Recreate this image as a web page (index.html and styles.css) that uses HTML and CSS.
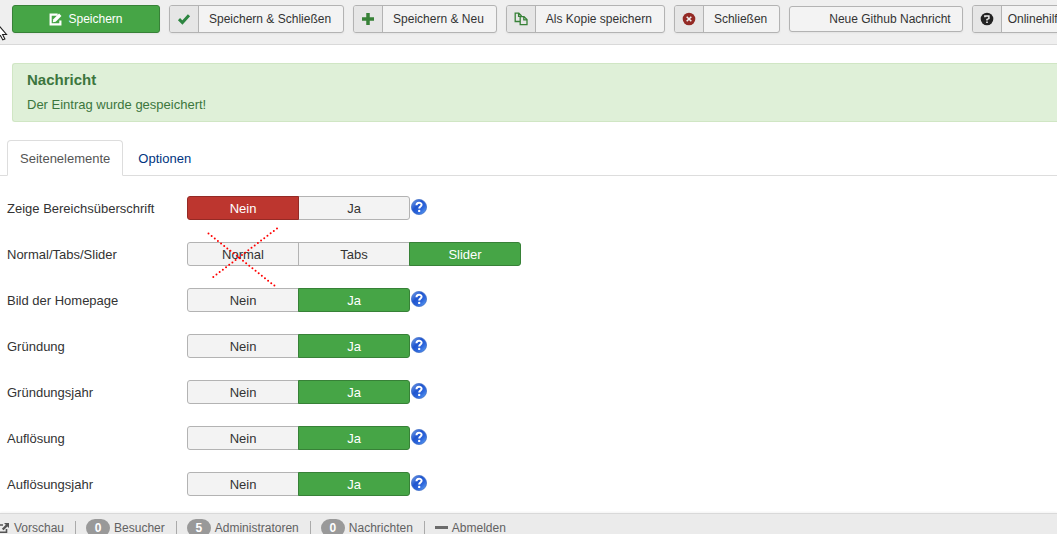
FILE: index.html
```html
<!DOCTYPE html>
<html lang="de">
<head>
    <meta charset="utf-8">
    <title>Seitenelemente</title>
    <link rel="stylesheet" href="styles.css">
</head>
<body>
    <div class="toolbar">
        <button type="button" class="btn btn-success">
            <svg width="13" height="13" viewBox="0 0 12 12"><path d="M8 1.500H1.500v9h9V7" fill="none" stroke="#fff" stroke-width="2"/><path d="M3.500 8.600l.5-2.800L9.300.5l2.200 2.200L6.200 8z" fill="#fff"/></svg>
            Speichern
        </button>
        <button type="button" class="btn">
            <span class="btn-icon"><svg width="14" height="14" viewBox="0 0 14 14"><path d="M2 7.200l3.400 3.300L12 3.300" fill="none" stroke="#2d8540" stroke-width="3"/></svg></span>
            <span class="btn-text">Speichern &amp; Schließen</span>
        </button>
        <button type="button" class="btn">
            <span class="btn-icon"><svg width="14" height="14" viewBox="0 0 14 14"><path d="M7 1v12M1 7h12" fill="none" stroke="#378137" stroke-width="3.500"/></svg></span>
            <span class="btn-text">Speichern &amp; Neu</span>
        </button>
        <button type="button" class="btn">
            <span class="btn-icon"><svg width="14" height="14" viewBox="0 0 14 14"><path d="M6 9.500H1.200V1.200H4.800L7.600 4M4.600 1.200V4.400H6" fill="none" stroke="#378137" stroke-width="1.300"/><path d="M6.200 12.600V4.600H10L13 7.600v5zM9.800 4.600v3.200H13" fill="none" stroke="#378137" stroke-width="1.300"/></svg></span>
            <span class="btn-text">Als Kopie speichern</span>
        </button>
        <button type="button" class="btn">
            <span class="btn-icon"><svg width="14" height="14" viewBox="0 0 14 14"><circle cx="7" cy="7" r="6.300" fill="#942a25"/><path d="M4.700 4.700l4.600 4.600M9.300 4.700L4.700 9.300" stroke="#eee" stroke-width="1.600"/></svg></span>
            <span class="btn-text">Schließen</span>
        </button>
        <button type="button" class="btn btn-plain">Neue Github Nachricht</button>
        <button type="button" class="btn btn-help">
            <span class="btn-icon"><svg width="14" height="14" viewBox="0 0 14 14"><circle cx="7" cy="7" r="6.300" fill="#222"/><path d="M4.900 5.300V4h4v2.600L7 7.400v1.200" fill="none" stroke="#eee" stroke-width="1.500"/><path d="M6.200 9.500h1.600V11H6.200z" fill="#eee"/></svg></span>
            <span class="btn-text">Onlinehilfe</span>
        </button>
        <svg class="cursor" width="8" height="18" viewBox="0 0 8 18"><path d="M-5-5L6.500 8.500H2.600l2.300 4.400-2.100 1L.5 9.500-5 14z" fill="#fff" stroke="#222" stroke-width="1.100"/></svg>
    </div>

    <main class="content">
        <div class="alert">
            <h4>Nachricht</h4>
            <p>Der Eintrag wurde gespeichert!</p>
        </div>

        <nav class="tabs">
            <a href="#elemente" class="active">Seitenelemente</a>
            <a href="#optionen">Optionen</a>
        </nav>

        <form class="fields" id="elemente">
            <div class="field" role="radiogroup" aria-labelledby="l1">
                <span class="field-label" id="l1">Zeige Bereichsüberschrift</span>
                <div class="choices">
                    <input type="radio" name="f1" id="f1n" checked><label for="f1n" class="no">Nein</label>
                    <input type="radio" name="f1" id="f1y"><label for="f1y">Ja</label>
                </div>
                <svg class="help" viewBox="0 0 16 16"><use href="#help"/></svg>
            </div>
            <div class="field" role="radiogroup" aria-labelledby="l2">
                <span class="field-label" id="l2">Normal/Tabs/Slider</span>
                <div class="choices">
                    <input type="radio" name="f2" id="f2a"><label for="f2a">Normal</label>
                    <input type="radio" name="f2" id="f2b"><label for="f2b">Tabs</label>
                    <input type="radio" name="f2" id="f2c" checked><label for="f2c">Slider</label>
                    <svg class="cross" width="76" height="64" viewBox="0 0 76 64"><path d="M4.500 7.500l67 53M73 2.500L8.500 51.500"/></svg>
                </div>
            </div>
            <div class="field" role="radiogroup" aria-labelledby="l3">
                <span class="field-label" id="l3">Bild der Homepage</span>
                <div class="choices">
                    <input type="radio" name="f3" id="f3n"><label for="f3n" class="no">Nein</label>
                    <input type="radio" name="f3" id="f3y" checked><label for="f3y">Ja</label>
                </div>
                <svg class="help" viewBox="0 0 16 16"><use href="#help"/></svg>
            </div>
            <div class="field" role="radiogroup" aria-labelledby="l4">
                <span class="field-label" id="l4">Gründung</span>
                <div class="choices">
                    <input type="radio" name="f4" id="f4n"><label for="f4n" class="no">Nein</label>
                    <input type="radio" name="f4" id="f4y" checked><label for="f4y">Ja</label>
                </div>
                <svg class="help" viewBox="0 0 16 16"><use href="#help"/></svg>
            </div>
            <div class="field" role="radiogroup" aria-labelledby="l5">
                <span class="field-label" id="l5">Gründungsjahr</span>
                <div class="choices">
                    <input type="radio" name="f5" id="f5n"><label for="f5n" class="no">Nein</label>
                    <input type="radio" name="f5" id="f5y" checked><label for="f5y">Ja</label>
                </div>
                <svg class="help" viewBox="0 0 16 16"><use href="#help"/></svg>
            </div>
            <div class="field" role="radiogroup" aria-labelledby="l6">
                <span class="field-label" id="l6">Auflösung</span>
                <div class="choices">
                    <input type="radio" name="f6" id="f6n"><label for="f6n" class="no">Nein</label>
                    <input type="radio" name="f6" id="f6y" checked><label for="f6y">Ja</label>
                </div>
                <svg class="help" viewBox="0 0 16 16"><use href="#help"/></svg>
            </div>
            <div class="field" role="radiogroup" aria-labelledby="l7">
                <span class="field-label" id="l7">Auflösungsjahr</span>
                <div class="choices">
                    <input type="radio" name="f7" id="f7n"><label for="f7n" class="no">Nein</label>
                    <input type="radio" name="f7" id="f7y" checked><label for="f7y">Ja</label>
                </div>
                <svg class="help" viewBox="0 0 16 16"><use href="#help"/></svg>
            </div>
        </form>
    </main>

    <footer class="status">
        <a href="#vorschau"><svg width="10" height="12" viewBox="0 0 10 12"><path d="M0 3h3M0 10.200h6.500V7" fill="none" stroke="#555" stroke-width="1.600"/><path d="M4 1h5v5L7.400 4.500 3.500 8.300 1.900 6.700l3.900-3.900z" fill="#555"/></svg>Vorschau</a>
        <span class="item"><span class="badge">0</span>Besucher</span>
        <span class="item"><span class="badge">5</span>Administratoren</span>
        <a href="#nachrichten" class="item"><span class="badge">0</span>Nachrichten</a>
        <a href="#abmelden" class="item"><svg width="13" height="12" viewBox="0 0 13 12"><path d="M0 4h13v3H0z" fill="#6b6b6b"/></svg>Abmelden</a>
    </footer>

    <svg class="defs" width="0" height="0">
        <defs>
            <linearGradient id="blue" x1="0" y1="0" x2="1" y2="1">
                <stop offset="0" stop-color="#7fa9ee"/>
                <stop offset=".4" stop-color="#1f55cf"/>
                <stop offset=".65" stop-color="#2d66dc"/>
                <stop offset="1" stop-color="#69b0f8"/>
            </linearGradient>
            <symbol id="help" viewBox="0 0 16 16">
                <circle cx="8" cy="8" r="7.600" fill="url(#blue)" stroke="#3a68c4" stroke-width=".7"/>
                <path d="M5.500 6.200C5.500 3 10.600 3 10.600 5.800 10.600 7.500 8.200 7.600 8.200 9.500" fill="none" stroke="#fff" stroke-width="2"/>
                <circle cx="8.200" cy="11.900" r="1.200" fill="#fff"/>
            </symbol>
        </defs>
    </svg>
</body>
</html>
```
FILE: styles.css
```css
* {
    box-sizing: border-box;
}
body {
    margin: 0;
    height: 100vh;
    display: flex;
    flex-direction: column;
    overflow: hidden;
    font-family: "Liberation Sans", Arial, sans-serif;
    font-size: 13px;
    line-height: 18px;
    color: #333;
    background: #fff;
}
a {
    color: #003580;
    text-decoration: none;
}

/* toolbar */
.toolbar {
    position: relative;
    display: flex;
    flex: none;
    align-items: center;
    gap: 9px;
    padding: 5px 0 11px 12px;
    background: #efefef;
    border-bottom: 1px solid #d9d9d9;
}
.btn {
    display: flex;
    flex: none;
    align-items: center;
    height: 28px;
    padding: 0;
    font: inherit;
    font-size: 12px;
    color: #333;
    white-space: nowrap;
    background: #f3f3f3;
    border: 1px solid #b3b3b3;
    border-radius: 3px;
    box-shadow: 0 1px 2px rgba(0,0,0,0.05);
    overflow: hidden;
}
.btn-success {
    justify-content: center;
    gap: 6px;
    width: 148px;
    color: #fff;
    background: #46a546;
    border-color: #378137;
}
.btn-icon {
    display: flex;
    align-items: center;
    justify-content: center;
    width: 29px;
    height: 26px;
    background: #e6e6e6;
    border-right: 1px solid #b3b3b3;
}
.btn-text {
    padding: 0 12px 0 10px;
}
.btn-plain {
    height: 26px;
    padding: 0 11px 0 39px;
}
.btn-help .btn-text {
    padding-left: 6px;
}
.cursor {
    position: absolute;
    left: 0;
    top: 26px;
}

/* message */
.content {
    flex: 1;
    min-height: 0;
    overflow: hidden;
}
.alert {
    margin: 18px 0 18px 12px;
    padding: 7px 14px;
    color: #3c763d;
    background: #dff0d8;
    border: 1px solid #d0e6c4;
    border-right: 0;
    border-radius: 3px 0 0 3px;
}
.alert h4 {
    margin: 0 0 7px;
    font-size: 15px;
    line-height: 18px;
}
.alert p {
    margin: 0;
}

/* tabs */
.tabs {
    display: flex;
    padding-left: 7px;
    border-bottom: 1px solid #ddd;
}
.tabs a {
    margin-bottom: -1px;
    padding: 9px 14px 7px;
    border: 1px solid transparent;
    border-radius: 4px 4px 0 0;
}
.tabs .active {
    padding: 9px 12px 7px;
    color: #555;
    background: #fff;
    border-color: #ddd #ddd #fff;
}

/* fields */
.fields {
    display: flex;
    flex-direction: column;
    gap: 22px;
    padding: 20px 7px;
}
.field {
    display: flex;
    align-items: center;
    height: 24px;
}
.field-label {
    flex: none;
    width: 180px;
    padding-top: 2px;
}
.choices {
    position: relative;
    display: flex;
}
.choices input {
    position: absolute;
    opacity: 0;
    pointer-events: none;
}
.choices label {
    width: 112px;
    height: 24px;
    line-height: 24px;
    text-align: center;
    background: #f3f3f3;
    border: 1px solid #b3b3b3;
}
.choices label:not(:first-of-type) {
    margin-left: -1px;
}
.choices label:first-of-type {
    border-radius: 3px 0 0 3px;
}
.choices label:last-of-type {
    border-radius: 0 3px 3px 0;
}
.choices input:checked + label {
    z-index: 1;
    color: #fff;
    background: #46a546;
    border-color: #378137;
}
.choices input:checked + label.no {
    background: #bd362f;
    border-color: #942a25;
}
.help {
    width: 16px;
    height: 16px;
    margin: 0 0 2px 1px;
}
.cross {
    position: absolute;
    left: 17px;
    top: -16px;
    z-index: 2;
    fill: none;
    stroke: #f00;
    stroke-width: 2;
    stroke-linecap: round;
    stroke-dasharray: 0 4;
    pointer-events: none;
}

/* status bar */
.status {
    display: flex;
    flex: none;
    align-items: flex-start;
    height: 21px;
    padding-top: 5px;
    overflow: hidden;
    font-size: 12px;
    color: #626262;
    background: #ebebeb;
    border-top: 1px solid #d9d9d9;
    box-shadow: 0 -1px 2px rgba(0,0,0,0.05);
}
.status a {
    color: #626262;
}
.status a, .status .item {
    display: flex;
    align-items: center;
    gap: 4px;
}
.status .item::before {
    content: "";
    width: 1px;
    height: 14px;
    margin: 0 6px 0 11px;
    background: #aaa;
}
.badge {
    width: 24px;
    height: 18px;
    font-weight: bold;
    text-align: center;
    color: #fff;
    background: #999;
    border-radius: 9px;
}
```
